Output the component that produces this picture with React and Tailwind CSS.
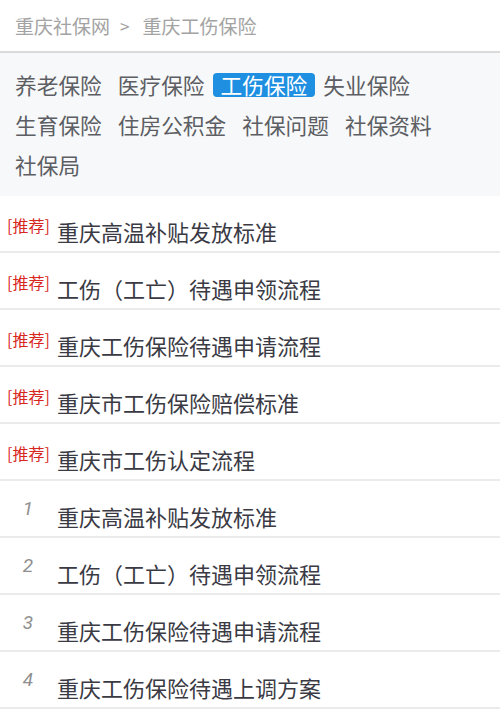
import React from "react";

const cats = ["养老保险", "医疗保险", "工伤保险", "失业保险", "生育保险", "住房公积金", "社保问题", "社保资料", "社保局"];
const rec = ["重庆高温补贴发放标准", "工伤（工亡）待遇申领流程", "重庆工伤保险待遇申请流程", "重庆市工伤保险赔偿标准", "重庆市工伤认定流程"];
const nums = ["重庆高温补贴发放标准", "工伤（工亡）待遇申领流程", "重庆工伤保险待遇申请流程", "重庆工伤保险待遇上调方案"];

const font = { fontFamily: '"Noto Sans CJK SC", "Noto Sans", sans-serif' };

export default function App() {
  return (
    <div className="w-[500px] h-[710px] overflow-hidden bg-white" style={font}>
      <div className="h-[53px] flex items-center pl-[15px] text-[19px] text-[#a3a3a3] border-b-2 border-[#dadada] leading-none">
        <span>重庆社保网</span>
        <span className="ml-[10px] mr-[13px] text-[17px]">&gt;</span>
        <span>重庆工伤保险</span>
      </div>
      <div className="bg-[#f7f8fa] pl-[7px] pt-[20px] pb-[19px] flex flex-wrap gap-y-[16px] text-[21.7px] text-[#5c5e63]">
        {cats.map((c) => (
          <span
            key={c}
            className={
              c === "工伤保险"
                ? "h-[24px] leading-[24px] px-[8px] rounded-[4px] bg-[#1e8fe1] text-white"
                : "h-[24px] leading-[24px] px-[8px]"
            }
          >
            {c}
          </span>
        ))}
      </div>
      <div>
        {rec.map((t, i) => (
          <div key={"r" + i} className="h-[57px] flex border-b-2 border-[#ebebeb]">
            <div className="w-[57px] pl-[7px] pt-[20px] text-[16px] leading-[18px] text-[#d7261e]">[推荐]</div>
            <div className="pt-[24px] text-[22px] leading-[22px] text-[#3a3a44]">{t}</div>
          </div>
        ))}
        {nums.map((t, i) => (
          <div key={"n" + i} className="h-[57px] flex border-b-2 border-[#ebebeb]">
            <div
              className="w-[57px] text-center pr-[1px] pt-[18px] text-[19px] leading-[19px] italic text-[#8f8f8f]"
              style={{ fontFamily: 'Roboto, "Liberation Sans", sans-serif' }}
            >
              {i + 1}
            </div>
            <div className="pt-[24px] text-[22px] leading-[22px] text-[#3a3a44]">{t}</div>
          </div>
        ))}
      </div>
    </div>
  );
}
